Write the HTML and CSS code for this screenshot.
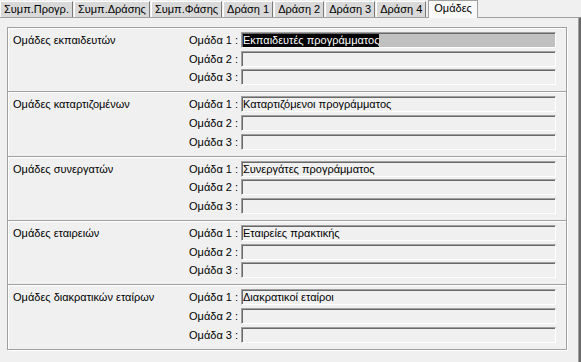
FILE: index.html
```html
<!DOCTYPE html>
<html lang="el">
<head>
    <meta charset="UTF-8">
    <title>Ομάδες</title>
    <link rel="stylesheet" href="styles.css">
</head>
<body>
    <div class="tabctl">
        <div class="tabs">
            <div class="tab">Συμπ.Προγρ.</div>
            <div class="tab">Συμπ.Δράσης</div>
            <div class="tab">Συμπ.Φάσης</div>
            <div class="tab">Δράση 1</div>
            <div class="tab">Δράση 2</div>
            <div class="tab">Δράση 3</div>
            <div class="tab">Δράση 4</div>
            <div class="tab tab-active">Ομάδες</div>
        </div>
        <div class="page">
            <div class="group">
                <div class="group-name">Ομάδες εκπαιδευτών</div>
                <div class="field-label">Ομάδα 1 :</div>
                <div class="field field-focus"><span class="selected">Εκπαιδευτές προγράμματος</span></div>
                <div class="field-label">Ομάδα 2 :</div>
                <div class="field"></div>
                <div class="field-label">Ομάδα 3 :</div>
                <div class="field"></div>
            </div>
            <div class="group">
                <div class="group-name">Ομάδες καταρτιζομένων</div>
                <div class="field-label">Ομάδα 1 :</div>
                <div class="field">Καταρτιζόμενοι προγράμματος</div>
                <div class="field-label">Ομάδα 2 :</div>
                <div class="field"></div>
                <div class="field-label">Ομάδα 3 :</div>
                <div class="field"></div>
            </div>
            <div class="group">
                <div class="group-name">Ομάδες συνεργατών</div>
                <div class="field-label">Ομάδα 1 :</div>
                <div class="field">Συνεργάτες προγράμματος</div>
                <div class="field-label">Ομάδα 2 :</div>
                <div class="field"></div>
                <div class="field-label">Ομάδα 3 :</div>
                <div class="field"></div>
            </div>
            <div class="group">
                <div class="group-name">Ομάδες εταιρειών</div>
                <div class="field-label">Ομάδα 1 :</div>
                <div class="field">Εταιρείες πρακτικής</div>
                <div class="field-label">Ομάδα 2 :</div>
                <div class="field"></div>
                <div class="field-label">Ομάδα 3 :</div>
                <div class="field"></div>
            </div>
            <div class="group">
                <div class="group-name">Ομάδες διακρατικών εταίρων</div>
                <div class="field-label">Ομάδα 1 :</div>
                <div class="field">Διακρατικοί εταίροι</div>
                <div class="field-label">Ομάδα 2 :</div>
                <div class="field"></div>
                <div class="field-label">Ομάδα 3 :</div>
                <div class="field"></div>
            </div>
        </div>
    </div>
</body>
</html>
```

FILE: styles.css
```css
body {
    margin: 0;
    background-color: #f0f0f0;
    font-family: "Liberation Sans", Arial, sans-serif;
    font-size: 11px;
    color: black;
    user-select: none;
}
.tabctl {
    width: 581px;
}
.tabs {
    display: flex;
    align-items: flex-end;
    height: 17px;
}
.tab {
    box-sizing: border-box;
    height: 16px;
    margin-right: 1px;
    padding: 0 3px 0 3px;
    line-height: 14px;
    background: #d9d9d9;
    border-top: 1px solid #fff;
    border-left: 1px solid #fff;
    border-right: 1px solid #7a7a7a;
    white-space: nowrap;
}
.tab-active {
    position: relative;
    z-index: 1;
    height: 18px;
    margin-bottom: -1px;
    margin-left: 1px;
    padding: 0 5px;
    line-height: 14px;
    background: #f9f9f9;
    border: 1px solid #a0a0a0;
    border-bottom: none;
}
.page {
    box-sizing: border-box;
    min-height: 345px;
    padding: 9px 12px 0 7px;
    border-top: 1px solid #a0a0a0;
    border-right: 2px solid #696969;
    box-shadow: inset -1px 0 #a0a0a0;
}
.group {
    display: grid;
    grid-template-columns: 1fr 52px 315px;
    grid-template-rows: repeat(3, 16px);
    row-gap: 2.67px;
    padding: 4px 10px 6px 5px;
    border: 1px solid #a0a0a0;
    box-shadow: inset 1px 1px #fff, 1px 1px #fff;
}
.group + .group {
    margin-top: -1px;
}
.group-name {
    grid-column: 1;
    grid-row: 1;
    align-self: center;
    line-height: 14px;
}
.field-label {
    grid-column: 2;
    padding-right: 3px;
    text-align: right;
    line-height: 16px;
    white-space: nowrap;
}
.field {
    grid-column: 3;
    box-sizing: border-box;
    height: 16px;
    padding-left: 1px;
    line-height: 14px;
    white-space: nowrap;
    overflow: hidden;
    border-top: 1px solid #a0a0a0;
    border-left: 1px solid #a0a0a0;
    border-right: 1px solid #fff;
    border-bottom: 1px solid #fff;
    box-shadow: inset 1px 1px #696969;
}
.field-focus {
    background: #c0c0c0;
}
.selected {
    display: inline-block;
    height: 13px;
    margin-top: 1px;
    line-height: 13px;
    background: black;
    color: white;
}
```
